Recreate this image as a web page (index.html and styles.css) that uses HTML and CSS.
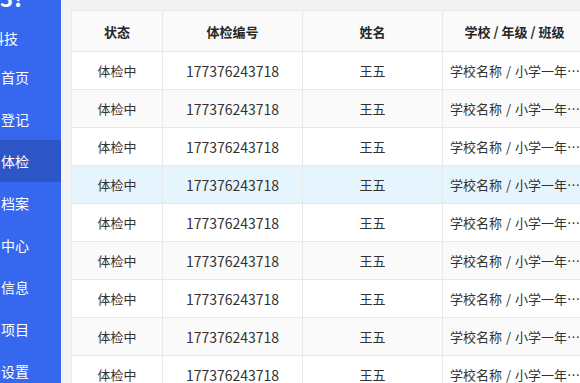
FILE: index.html
```html
<!DOCTYPE html>
<html lang="zh-CN">
<head>
<meta charset="utf-8">
<link rel="stylesheet" href="styles.css">
</head>
<body>
<div class="layout">
  <aside class="sidebar">
    <div class="logo"><div class="logo-text">3!</div></div>
    <div class="brand">科技</div>
    <nav class="menu">
      <div class="menu-item">首页</div>
      <div class="menu-item">登记</div>
      <div class="menu-item active">体检</div>
      <div class="menu-item">档案</div>
      <div class="menu-item">中心</div>
      <div class="menu-item">信息</div>
      <div class="menu-item">项目</div>
      <div class="menu-item">设置</div>
    </nav>
  </aside>
  <main class="main">
    <table class="grid">
      <colgroup>
        <col class="c1"><col class="c2"><col class="c3"><col class="c4">
      </colgroup>
      <thead>
        <tr><th>状态</th><th>体检编号</th><th>姓名</th><th>学校 / 年级 / 班级</th></tr>
      </thead>
      <tbody>
        <tr><td>体检中</td><td class="num">177376243718</td><td>王五</td><td class="school"><div class="ell">学校名称 / 小学一年级 / 一班</div></td></tr>
        <tr><td>体检中</td><td class="num">177376243718</td><td>王五</td><td class="school"><div class="ell">学校名称 / 小学一年级 / 一班</div></td></tr>
        <tr><td>体检中</td><td class="num">177376243718</td><td>王五</td><td class="school"><div class="ell">学校名称 / 小学一年级 / 一班</div></td></tr>
        <tr class="hover"><td>体检中</td><td class="num">177376243718</td><td>王五</td><td class="school"><div class="ell">学校名称 / 小学一年级 / 一班</div></td></tr>
        <tr><td>体检中</td><td class="num">177376243718</td><td>王五</td><td class="school"><div class="ell">学校名称 / 小学一年级 / 一班</div></td></tr>
        <tr><td>体检中</td><td class="num">177376243718</td><td>王五</td><td class="school"><div class="ell">学校名称 / 小学一年级 / 一班</div></td></tr>
        <tr><td>体检中</td><td class="num">177376243718</td><td>王五</td><td class="school"><div class="ell">学校名称 / 小学一年级 / 一班</div></td></tr>
        <tr><td>体检中</td><td class="num">177376243718</td><td>王五</td><td class="school"><div class="ell">学校名称 / 小学一年级 / 一班</div></td></tr>
        <tr><td>体检中</td><td class="num">177376243718</td><td>王五</td><td class="school"><div class="ell">学校名称 / 小学一年级 / 一班</div></td></tr>
        <tr><td>体检中</td><td class="num">177376243718</td><td>王五</td><td class="school"><div class="ell">学校名称 / 小学一年级 / 一班</div></td></tr>
      </tbody>
    </table>
  </main>
</div>
</body>
</html>
```
FILE: styles.css
```css
html, body {
  margin: 0;
  padding: 0;
  height: 100%;
  overflow: hidden;
  background: #f3f3f3;
  font-family: "Noto Sans CJK SC", "Microsoft YaHei", sans-serif;
}
.layout {
  display: flex;
  height: 100%;
}
.sidebar {
  width: 61px;
  flex: none;
  background: #3568ee;
  color: #fff;
  overflow: hidden;
}
.logo {
  height: 11px;
  overflow: hidden;
}
.logo-text {
  margin-top: -14px;
  font-size: 22px;
  font-weight: 700;
  line-height: 22px;
  letter-spacing: 1px;
  white-space: nowrap;
}
.brand {
  margin-left: -10px;
  margin-top: 19px;
  font-size: 14px;
  line-height: 16px;
  height: 16px;
  white-space: nowrap;
}
.menu {
  margin-top: 10px;
}
.menu-item {
  height: 42px;
  line-height: 42px;
  font-size: 14px;
  padding-left: 1px;
  white-space: nowrap;
}
.menu-item.active {
  background: #2c56c6;
}
.main {
  flex: 1;
  min-width: 0;
  padding: 10px 0 0 10px;
  overflow: hidden;
}
.grid {
  border-collapse: collapse;
  table-layout: fixed;
  width: 515px;
  background: #fff;
  color: #333;
  font-size: 13px;
}
.c1 { width: 91px; }
.c2 { width: 140px; }
.c3 { width: 140px; }
.c4 { width: 144px; }
.grid th, .grid td {
  border: 1px solid #e8e8e8;
  padding: 0;
  text-align: center;
  white-space: nowrap;
}
.grid th {
  height: 40px;
  background: #fafafa;
  font-weight: 700;
  color: #262626;
}
.grid td {
  height: 37px;
}
.grid tbody tr:nth-child(even) td {
  background: #fafafa;
}
.grid tbody tr.hover td {
  background: #e6f5fd;
}
.grid td.num {
  font-size: 14px;
}
.grid td.school {
  text-align: left;
  padding: 0 4px 0 7px;
  word-spacing: 1px;
}
.ell {
  overflow: hidden;
  text-overflow: ellipsis;
  white-space: nowrap;
}
```
